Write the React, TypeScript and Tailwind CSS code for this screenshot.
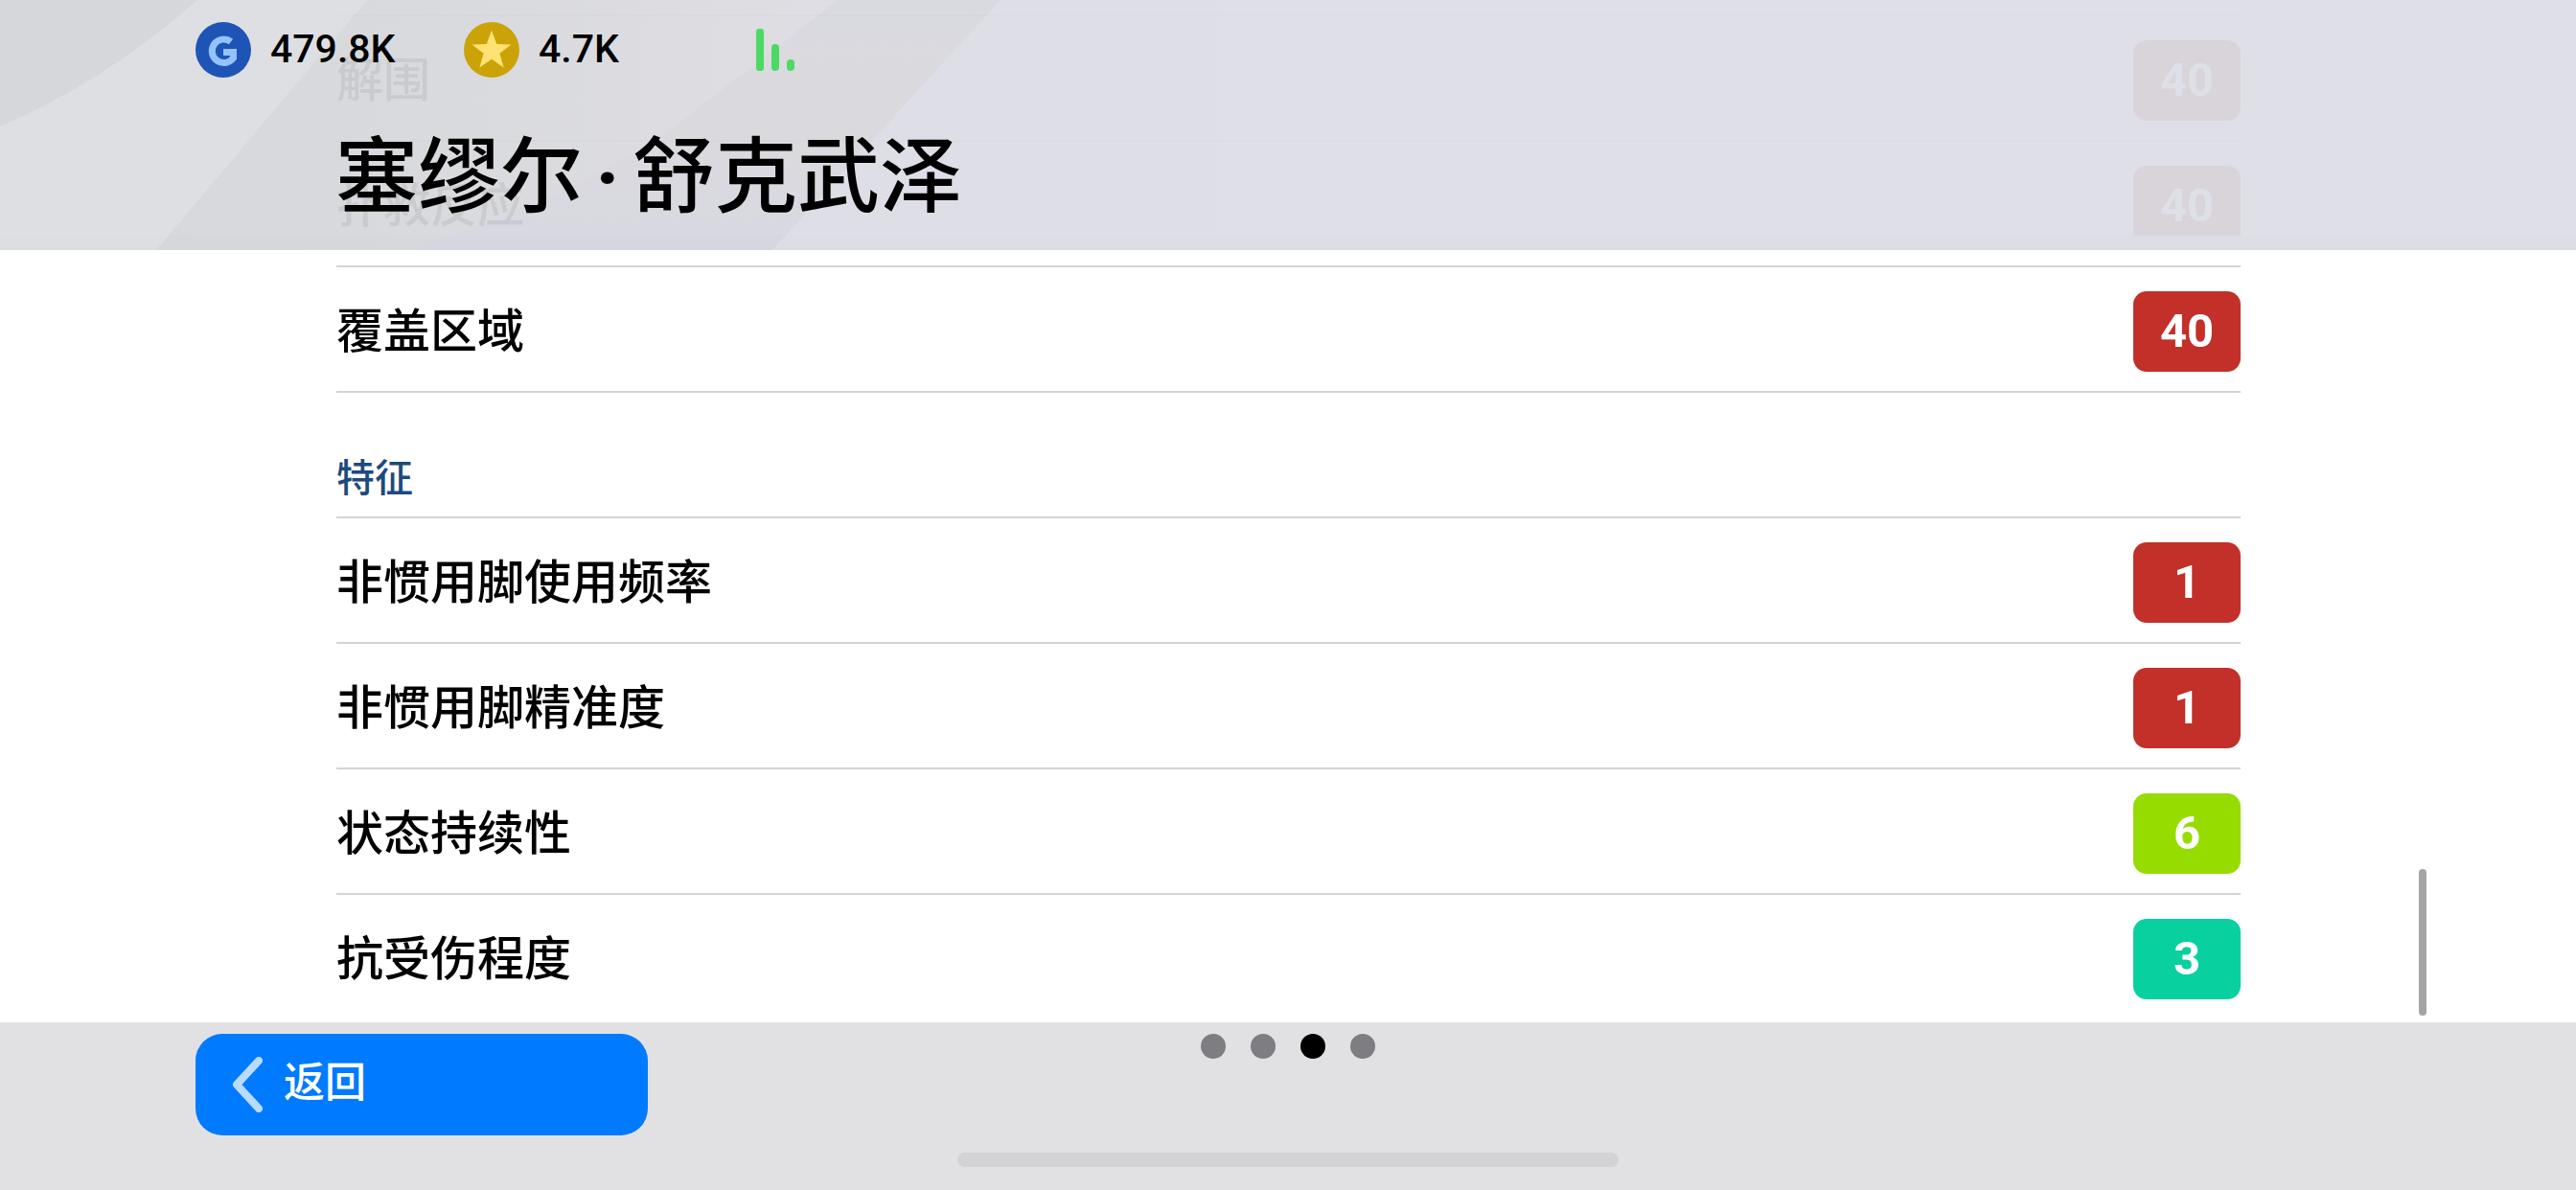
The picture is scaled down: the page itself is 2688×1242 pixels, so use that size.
import clsx from "clsx";

type Stat = { label: string; value: number; color: string };

const goalkeeping: Stat[] = [
  { label: "解围", value: 40, color: "bg-[#8c4a20]" },
  { label: "扑救反应", value: 40, color: "bg-[#8c4a20]" },
  { label: "覆盖区域", value: 40, color: "bg-[#c23029]" },
];

const traits: Stat[] = [
  { label: "非惯用脚使用频率", value: 1, color: "bg-[#c23029]" },
  { label: "非惯用脚精准度", value: 1, color: "bg-[#c23029]" },
  { label: "状态持续性", value: 6, color: "bg-[#96dc00]" },
  { label: "抗受伤程度", value: 3, color: "bg-[#08d09f]" },
];

const pages = [1, 2, 3, 4];

function StatRow({ label, value, color }: Stat) {
  return (
    <li className="flex h-[131px] items-center justify-between border-t-2 border-[#d4d4d4] pt-1">
      <span className="pb-2 text-[49px] leading-[72px] font-medium">{label}</span>
      <span
        className={clsx(
          "flex h-[84px] w-28 items-center justify-center rounded-[14px] font-[Roboto,sans-serif] text-[49px] leading-none font-bold text-white",
          color,
        )}
      >
        {value}
      </span>
    </li>
  );
}

function HeaderBackdrop() {
  return (
    <svg className="absolute inset-0 h-full w-full" viewBox="0 0 2688 261" preserveAspectRatio="xMinYMin slice" aria-hidden="true">
      <defs>
        <linearGradient id="mid" x1="0" x2="1" y1="0" y2="0">
          <stop offset="0" stopColor="#d5d6d9" />
          <stop offset="0.4" stopColor="#d6d7da" />
          <stop offset="1" stopColor="#dcdce3" />
        </linearGradient>
        <linearGradient id="band" x1="0" x2="0" y1="0" y2="1">
          <stop offset="0" stopColor="#d7d7e0" />
          <stop offset="0.4" stopColor="#d8d8dc" />
          <stop offset="1" stopColor="#d6d6e0" />
        </linearGradient>
        <clipPath id="foot">
          <rect y="246" width="2688" height="15" />
        </clipPath>
        <g id="shards">
          <rect width="2688" height="261" fill="#ddddE6" />
          <path d="M0 0H874L560 261H0Z" fill="url(#mid)" />
          <path d="M874 0H1044L806 261H420Q570 220 700 135Z" fill="url(#band)" />
          <path d="M0 0H383L163 261H0Z" fill="#dcdee1" />
          <path d="M0 0H206Q110 85 0 132Z" fill="#d3d5d8" />
        </g>
      </defs>
      <use href="#shards" opacity="0.94" />
      <use href="#shards" clipPath="url(#foot)" />
    </svg>
  );
}

function CoinIcon() {
  return (
    <svg className="size-[58px]" viewBox="0 0 58 58" aria-hidden="true">
      <circle cx="29" cy="29" r="29" fill="#1d54b6" />
      <path d="M37 20.500A12.300 12.300 0 1 0 39.500 37.500V31.500H29" fill="none" stroke="#93c2ff" strokeWidth="7" />
    </svg>
  );
}

function StarIcon() {
  return (
    <svg className="size-[58px]" viewBox="0 0 58 58" aria-hidden="true">
      <circle cx="29" cy="29" r="29" fill="#cba309" />
      <path d="M29 8.500L34.200 22.900L49.400 23.400L37.400 32.700L41.600 47.400L29 38.800L16.400 47.400L20.600 32.700L8.600 23.400L23.800 22.900Z" fill="#ffe273" />
    </svg>
  );
}

function SignalIcon() {
  return (
    <svg className="h-11 w-[42px]" viewBox="0 0 42 44" fill="#4cd964" aria-hidden="true">
      <rect x="1" width="8" height="44" rx="3" />
      <rect x="17" y="16" width="8" height="28" rx="4" />
      <rect x="33" y="32" width="8" height="12" rx="4" />
    </svg>
  );
}

export default function App() {
  return (
    <div className="relative flex min-h-screen flex-col bg-white font-['Noto_Sans_CJK_SC',sans-serif] text-black">
      <header className="absolute inset-x-0 top-0 h-[261px] overflow-hidden">
        <HeaderBackdrop />
        <div className="relative flex h-[104px] items-center pl-[204px] font-[Roboto,sans-serif] text-[41px] font-medium">
          <CoinIcon />
          <span className="ml-5 w-[202px]">479.8K</span>
          <StarIcon />
          <span className="ml-5 w-[226px]">4.7K</span>
          <SignalIcon />
        </div>
        <h1 className="relative pl-[350px] text-[86px] leading-[148px] font-medium">
          塞缪尔
          <span className="inline-block w-[52px] text-center font-[Roboto,sans-serif] font-bold">·</span>
          舒克武泽
        </h1>
      </header>

      <main className="flex-1 pt-[15px] pr-[350px] pl-[351px]">
        <ul>
          {goalkeeping.map((stat) => (
            <StatRow key={stat.label} {...stat} />
          ))}
        </ul>
        <h2 className="h-[131px] border-t-2 border-[#d4d4d4] pt-14 text-[40px] leading-[60px] font-medium text-[#1c4a7d]">特征</h2>
        <ul>
          {traits.map((stat) => (
            <StatRow key={stat.label} {...stat} />
          ))}
        </ul>
      </main>
      <div className="absolute top-[907px] right-[156px] h-[153px] w-2 rounded-full bg-[#a4a4a4]" />

      <footer className="grid h-[175px] grid-cols-3 bg-[#e1e1e3] pt-3">
        <div className="pl-[204px]">
          <button className="flex h-[106px] w-[472px] items-center rounded-[28px] bg-[#007aff] pl-[38px] text-left text-[43px] font-medium text-white">
            <svg className="mr-[22px] h-[58px] w-8" viewBox="0 0 32 58" fill="none" stroke="#b8dbff" strokeWidth="8" strokeLinecap="round" strokeLinejoin="round" aria-hidden="true">
              <path d="M28 4L5 29l23 25" />
            </svg>
            <span className="pb-3">返回</span>
          </button>
        </div>
        <div className="flex flex-col items-center justify-between pb-6">
          <nav className="flex gap-[26px]">
            {pages.map((page) => (
              <button key={page} aria-label={`${page}`} className={clsx("size-[26px] rounded-full", page === 3 ? "bg-black" : "bg-[#7e7d82]")} />
            ))}
          </nav>
          <div className="h-[15px] w-[690px] rounded-full bg-[#d3d3d5]" />
        </div>
      </footer>
    </div>
  );
}
